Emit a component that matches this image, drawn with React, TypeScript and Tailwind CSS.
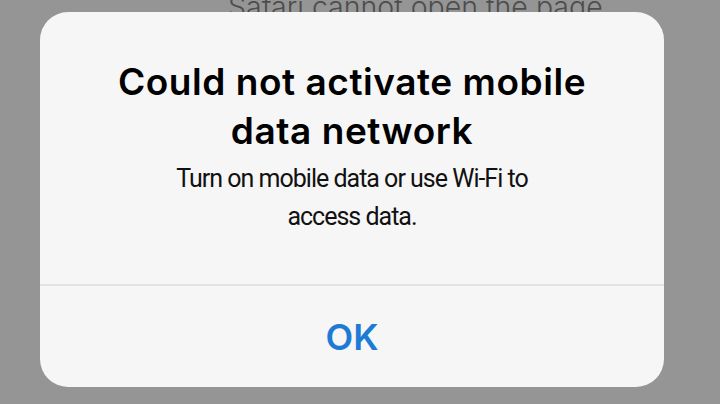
import React from "react";

export default function App() {
  return (
    <div
      className="relative w-[720px] h-[404px] overflow-hidden bg-[#959595]"
      style={{ fontFamily: "Inter, 'Noto Sans', sans-serif" }}
    >
      <div className="absolute left-[228px] top-[-7px] text-[28.5px] leading-none font-light text-[#4d4d4d] whitespace-nowrap">
        Safari cannot open the page
      </div>
      <div className="relative ml-[40px] mt-[12px] w-[624px] h-[375px] rounded-[28px] bg-[#f6f6f6] flex flex-col overflow-hidden">
        <div className="h-[272px] flex flex-col items-center pt-[45px]">
          <div className="text-[37px] leading-[49px] font-semibold text-black text-center tracking-[0.55px]">
            Could not activate mobile
            <br />
            data network
          </div>
          <div
            className="mt-[5px] text-[25px] leading-[38px] text-[#111] text-center tracking-[-1px]"
            style={{ fontFamily: "Roboto, 'Noto Sans', sans-serif" }}
          >
            Turn on mobile data or use Wi-Fi to
            <br />
            access data.
          </div>
        </div>
        <div className="h-[2px] bg-[#e4e4e4]" />
        <div className="flex-1 flex items-center justify-center">
          <span className="text-[36px] font-semibold text-[#1c7bd4] leading-none">OK</span>
        </div>
      </div>
    </div>
  );
}
